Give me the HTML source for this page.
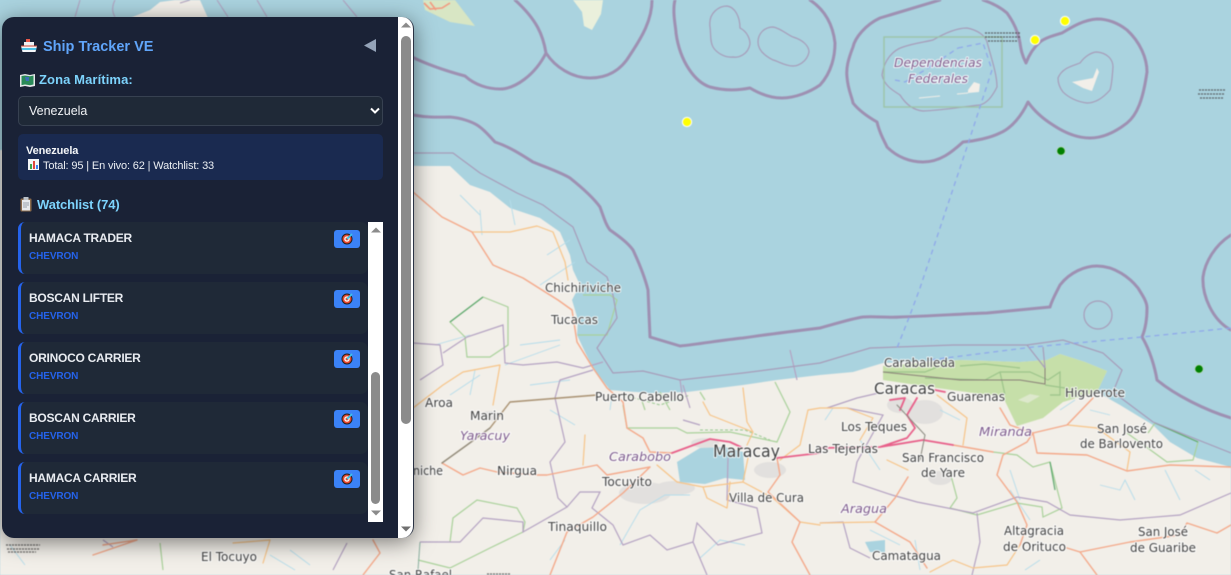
<!DOCTYPE html>
<html lang="es"><head><meta charset="utf-8"><title>Ship Tracker VE</title>
<style>
html,body{margin:0;padding:0;width:1231px;height:575px;overflow:hidden;background:#aad3df}
body{position:relative;font-family:"Liberation Sans",sans-serif}
#map{position:absolute;left:0;top:0;filter:blur(.5px)}
#map text{font-family:"DejaVu Sans",sans-serif;fill:#404040;font-size:12.5px;paint-order:stroke;stroke:rgba(255,255,255,.85);stroke-width:2px;stroke-linejoin:round}
#map text.r{fill:#7d5a8c;font-style:italic}
.p{position:absolute;left:2px;top:17px;width:411px;height:521px;border-radius:12px;background:#1a2236;box-shadow:0 4px 22px rgba(0,0,0,.5);overflow:hidden;border-right:1px solid #2a3244;box-sizing:content-box}
.a{position:absolute;white-space:nowrap}
.sb{position:absolute;background:#fff}
.th{position:absolute;background:#8b8b8b;border-radius:5px}
.card{position:absolute;left:16px;width:350px;height:52px;background:#1f2937;border-left:3px solid #2563eb;border-radius:7px;box-sizing:border-box}
.card b{position:absolute;left:8px;top:9px;font-size:12px;line-height:15px;color:#e8ebf0;letter-spacing:-.25px}
.card i{position:absolute;left:8px;top:28px;font-style:normal;font-weight:bold;font-size:10px;line-height:13px;color:#2563eb;letter-spacing:-.1px}
.card u{position:absolute;left:313px;top:8px;width:26px;height:18px;background:#3b82f6;border-radius:3px;text-decoration:none}
.card svg{position:absolute;left:7px;top:3px}
select{appearance:none;-webkit-appearance:none;position:absolute;left:16px;top:79px;width:365px;height:30px;background:#1f2937;border:1px solid #374151;border-radius:5px;color:#f0f2f5;font:12.5px "Liberation Sans",sans-serif;padding:0 0 0 10px;margin:0;box-sizing:border-box}
</style></head><body>
<svg id="map" width="1231" height="575" viewBox="0 0 1231 575" xmlns="http://www.w3.org/2000/svg">
<rect width="1231" height="575" fill="#aad3df"/>
<!-- land -->
<path fill="#f2efe9" d="M0 150 L420 166 L450 166 L470 185 L490 192 L510 208 L540 218 L560 232 L570 255 L573 270 L580 285 L572 300 L578 320 L577 335 L585 352 L593 368 L610 390 L650 393 L687 392 L743 385 L777 380 L820 375 L853 372 L883 363 L960 360 L1020 362 L1047 360 L1060 354 L1085 362 L1107 371 L1097 392 L1120 405 L1153 425 L1170 442 L1197 458 L1231 467 L1231 575 L0 575Z"/>
<!-- islands -->
<path fill="#f2efe9" d="M130 18 L150 10 L160 2 L175 0 L200 0 L208 18Z"/>
<path fill="#d8e6c4" d="M423 0 L455 0 L475 26 L450 22 L425 10Z"/>
<path fill="none" stroke="#f29a80" stroke-width="1.6" d="M424 3 L430 9 L442 8 L450 3 M430 2 L436 10"/>
<path fill="#eaf0dc" d="M573 0 L603 0 L601 14 L592 30 L584 26 L582 12Z"/>
<path fill="#f2efe9" d="M1072 82 L1093 78 L1097 68 L1099 72 L1092 91 L1083 88Z"/>
<path fill="#f2efe9" d="M968 90 L974 82 L980 84 L979 92 L968 93Z"/>
<path fill="none" stroke="#f2efe9" d="M919 98 L940 96 M957 94 L968 93"/>
<!-- park -->
<path fill="#c6dfa9" d="M883 366 L960 360 L1020 362 L1047 360 L1060 354 L1085 362 L1107 371 L1097 392 L1063 402 L1043 418 L1017 426 L1003 397 L937 388 L883 380Z"/>
<path fill="#dde8cc" d="M1018 400 L1030 394 L1040 396 L1028 403Z"/>
<path fill="none" stroke="#9cc48a" stroke-width="1.2" d="M883 372 L925 372 L950 362 M925 378 L985 380 L1000 372 L1030 372 L1048 380 L1060 372 L1060 395 L1050 395 M1000 372 L1005 395 M960 366 L985 364 L1020 368 M1045 385 L1065 388"/>
<path fill="none" stroke="#8a7f78" stroke-width="1" d="M883 372 L960 380 L1020 380 L1045 384 L1045 368"/>
<!-- urban -->
<g fill="#e2e0de"><ellipse cx="925" cy="412" rx="18" ry="12"/><ellipse cx="900" cy="405" rx="13" ry="8"/><ellipse cx="645" cy="493" rx="26" ry="11"/><ellipse cx="675" cy="488" rx="20" ry="7"/><ellipse cx="770" cy="470" rx="16" ry="8"/><ellipse cx="490" cy="416" rx="10" ry="5"/><ellipse cx="940" cy="478" rx="12" ry="7"/><ellipse cx="705" cy="443" rx="14" ry="5"/></g>
<!-- lakes -->
<path fill="#aad3df" d="M677 462 L700 448 L725 447 L743 452 L745 480 L725 478 L705 484 L680 482Z"/>
<path fill="#aad3df" d="M865 542 L885 540 L885 552 L870 552Z"/>
<path fill="#aad3df" d="M582 302 L600 295 L607 315 L597 335 L578 335Z"/>
<!-- rivers -->
<path fill="none" stroke="#b4dcea" stroke-width=".9" d="M435 345 L470 335 M520 345 L560 340 M505 365 L560 345 M450 395 L480 375 M470 395 L475 370 M530 385 L570 380 M550 410 L575 425 M610 410 L612 395 M620 545 L640 510 L665 495 L690 495 M550 560 L565 540 M700 558 L720 540 L745 545 M460 195 L480 215 M480 210 L482 235 M510 200 L515 225 M547 255 L570 240 M540 285 L575 262 M833 408 L825 420 M860 440 L880 470 M1010 470 L1020 500 M1100 485 L1120 490 L1125 480 L1135 500 M1165 470 L1180 500 M1210 480 L1195 470 M960 420 L940 410 M1060 410 L1075 400 M1090 410 L1110 415 M10 545 L25 565 M290 550 L310 565 M270 555 L295 570 M1030 520 L1010 490 M1040 560 L1025 570 M870 530 L900 545 M915 540 L920 570"/>
<!-- green admin -->
<path fill="none" stroke="#a9d19a" stroke-width="1.2" d="M450 322 L483 297 L508 307 L508 345 L490 357 L467 357 L465 337Z M623 405 L627 428 L677 428 L687 433 L730 432 L777 442 L790 412 L775 382 M640 395 L645 410 M660 392 L670 410 M700 392 L705 400 M950 472 L957 498 L950 508 L977 515 L1017 503 L1042 507 L1043 517 L1062 508 L1050 462 L1033 467 L1017 455 L993 452 M1127 433 L1167 462 L1193 460 L1198 442 L1155 423 L1148 433 M450 542 L453 518 L477 500 L517 508 L525 522 L523 532 L490 548 L450 568 L418 560 M583 295 L610 295 L617 300 L607 335 L578 335 M160 543 L163 570"/>
<path fill="none" stroke="#5ea86e" stroke-width="1.2" d="M450 322 L483 297 M1155 423 L1198 442 M1050 462 L1055 490"/>
<path fill="none" stroke="#98c890" stroke-width="1" stroke-dasharray="3 2" d="M623 395 L660 405 L690 395 M700 430 L745 430 L770 440"/>
<path fill="none" stroke="#8ab0a0" stroke-width="1" d="M420 542 L418 570"/>
<!-- purple admin -->
<path fill="none" stroke="#b4a2c2" stroke-width="1.2" d="M413 343 L440 345 L443 365 L420 380 M443 353 L467 337 L503 325 L505 363 L523 365 L557 362 L583 368 L603 362 M593 370 L560 380 L555 398 L565 442 L550 462 L558 498 L567 507 L523 532 L523 522 L483 518 L460 542 L420 542 M567 507 L580 492 L600 492 L592 508 L613 525 L623 545 L650 535 L667 550 L693 542 L697 523 L718 545 L762 533 L757 508 L727 500 L728 458 M693 542 L707 575 M827 408 L857 398 L883 392 M847 408 L883 415 L857 462 L853 482 L892 495 L917 502 L973 513 L1017 497 L1047 502 L1070 515 L1120 520 L1180 515 L1231 493 M977 513 L980 542 L972 575 M820 523 L843 522 L850 548 L870 558 M797 380 L790 350 M680 380 L683 400 M683 420 L700 425 M103 540 L113 547 M347 543 L333 570 M690 408 L683 385"/>
<!-- roads -->
<g fill="none" stroke-linejoin="round" stroke-linecap="round">
<path stroke="#f7c488" stroke-width="1.2" d="M413 408 L443 385 L463 372 L500 365 L493 405 M472 232 L510 232 L537 226 L553 232 L565 262 L568 280 M585 435 L583 465 M657 465 L677 482 L703 487 L743 482 L748 458 M703 487 L707 498 L727 508 L730 482 M743 482 L773 498 L800 522 L820 525 M703 402 L710 415 L753 432 L747 445 M743 388 L747 422 L753 432 M780 460 L800 445 L808 410 L820 408 M820 523 L875 522 M1068 425 L1097 428 L1130 452 L1127 470 M908 470 L887 460 M937 395 L967 418 L963 445 M1020 545 L1007 565 L973 568 L953 560 L930 572 M820 408 L847 408 L873 418 L860 440 M233 543 L270 540 L263 563"/>
<path stroke="#f4a98a" stroke-width="1.4" d="M413 192 L442 217 L472 232 L493 265 L523 278 L542 290 L558 300 L572 310 L577 342 L593 368 L607 388 L623 402 L627 428 L643 438 L650 452 L672 453 M442 463 L463 475 L480 468 L497 472 L537 475 L547 475 L597 465 L607 475 L650 467 M650 467 L623 493 L593 517 L567 532 L550 575 M777 458 L780 475 L768 492 L800 522 L792 542 L810 575 M1033 433 L1067 425 L1093 398 M1033 433 L1037 453 L1087 455 L1127 471 L1170 465 L1231 467 M1033 433 L1027 442 L1003 455 L997 475 L1017 502 L1027 525 L1020 545 M1000 408 L1010 425 L1033 433 M908 477 L895 498 L875 522 L910 542 L927 568 M1067 548 L1080 552 L1130 542 L1180 535 L1187 523 L1217 533 L1231 525 M1080 552 L1097 575 M953 445 L993 452 M103 545 L137 540 L93 555 M373 540 L380 553 L363 575"/>
<path stroke="#e8608a" stroke-width="1.8" d="M672 453 L710 439 L730 442 L743 448 M777 458 L820 453 M820 448 L880 447 L907 438 L915 428 L907 415 L917 398 M923 440 L953 445 M880 447 L923 440 M935 390 L945 392 M890 400 L905 398 M905 398 L900 410"/>
<path stroke="#a89070" stroke-width="1.4" d="M442 463 L467 445 L490 428 L510 402 L597 395"/>
<path stroke="#8a8a80" stroke-width="1" d="M442 463 L467 445 L490 428 M897 405 L925 435 L920 460"/>
</g>
<!-- inner maritime -->
<path fill="none" stroke="#a79cb9" stroke-width="1.2" d="M413 153 L453 153 L480 173 L517 193 L543 205 L573 227 L587 262 L607 277 L613 295 L617 318 L597 348 L613 373 L643 371 L680 380 L743 373 L820 363 L870 348 L953 345 L1027 345 L1063 340 L1103 353 L1122 370 L1113 392 L1153 422 L1231 453"/>
<path fill="none" stroke="#a79cb9" stroke-width="1.2" d="M1043 347 L1045 368 M1027 345 L1045 368 M710 27 C708 12 720 6 727 6 C735 7 740 17 740 28 C748 32 750 40 750 44 C748 55 738 58 733 57 C724 58 716 52 713 47 C710 42 711 34 710 27Z M758 42 C758 33 765 27 773 27 C780 28 788 35 793 37 C803 40 809 46 809 52 C807 62 798 66 793 66 C785 66 778 61 773 60 C765 56 758 50 758 42Z M1058 78 C1062 68 1072 66 1080 63 C1085 56 1092 52 1097 52 C1108 53 1113 60 1113 67 C1112 78 1112 84 1110 90 C1103 98 1095 103 1087 103 C1077 102 1068 97 1063 92 C1059 87 1058 83 1058 78Z M882 75 C884 60 893 50 903 47 C915 43 925 42 933 40 C945 33 957 28 967 28 C977 30 985 35 987 42 C992 60 997 75 997 87 C992 97 987 103 980 105 C960 107 945 110 923 111 C912 110 905 103 900 95 C892 90 884 85 882 75Z"/>
<circle cx="1098" cy="315" r="14" fill="none" stroke="#a79cb9" stroke-width="1.2"/>
<path fill="none" stroke="#b0a2c0" stroke-width="1.1" d="M115 0 C112 6 112 12 115 17 M75 17 L80 0 M217 0 L228 17 M257 0 L267 17 M343 0 L357 17 M180 3 L190 0"/>
<!-- main maritime -->
<path fill="none" stroke="#9e90b2" stroke-width="3" stroke-linejoin="round" stroke-linecap="round" d="M410 56 C430 66 450 72 465 76 C475 85 488 89 500 89 C515 89 535 75 546 53 C543 35 537 20 515 0 M546 53 C555 67 572 78 590 78 C605 78 620 72 630 55 C642 37 652 20 652 0 M675 0 C672 12 676 28 676 33 C680 62 695 82 710 87 C725 91 740 90 750 88 C760 94 770 98 782 98 C795 98 810 92 820 85 C832 72 835 55 835 43 C833 25 825 10 810 0 M940 0 C920 6 900 12 880 18 C865 25 855 38 853 47 C848 60 846 68 847 77 C848 90 852 97 853 103 C860 112 870 118 877 122 C880 135 885 142 887 147 C897 157 910 162 923 162 C940 162 952 152 963 142 C975 141 990 138 1000 133 C1012 128 1022 115 1028 102 C1035 112 1045 120 1053 125 C1065 133 1078 138 1090 138 C1105 138 1118 130 1127 123 C1137 115 1143 100 1147 72 C1147 58 1140 42 1127 30 C1118 23 1108 19 1097 19 C1083 20 1072 27 1062 33 C1052 36 1045 38 1040 42 C1033 48 1029 55 1026 63 C1022 55 1021 50 1020 43 C1018 30 1012 20 1007 13 C1000 7 992 3 983 0 M1231 235 C1215 245 1205 262 1203 277 C1202 295 1212 320 1231 330 M1050 307 C1052 300 1055 295 1060 285 C1070 272 1085 266 1097 266 C1115 266 1130 278 1138 288 C1143 296 1147 302 1147 308 C1147 320 1145 330 1142 337 C1150 350 1155 368 1157 380 C1175 395 1205 410 1231 418 M413 115 C430 118 440 117 450 117 C462 118 472 122 477 125 C485 130 490 137 495 142 C510 147 522 155 533 162 C545 167 560 172 570 178 C585 190 595 200 600 207 C604 218 606 225 610 230 C620 237 628 243 633 250 C640 265 645 278 648 290 L650 337 C660 340 670 343 680 346 C700 344 722 340 743 338 C770 334 795 331 820 328 C835 324 850 319 863 317 C875 316 888 318 900 317 C930 316 960 314 987 313 C1010 311 1030 309 1050 307"/>
<!-- fed rect -->
<rect x="884" y="37" width="118" height="70" fill="none" stroke="#9cc4a8" stroke-width="1.4"/>
<!-- maritime dashed -->
<path fill="none" stroke="#8fa8ea" stroke-width="1.3" stroke-dasharray="5 4" d="M958 48 L983 43 L992 70 L967 147 L920 288 L910 315 L897 348 M1231 328 L1142 337 L1033 347 L930 360 M895 80 L905 82 L925 70 L958 48"/>
<!-- garbled labels -->
<g fill="none" stroke="#444" stroke-width="1.2" opacity=".8" stroke-dasharray="2 1"><path d="M985 33 H1020 M985 37 H1020 M988 41 H1018"/><path d="M1199 90 H1225 M1198 94 H1225 M1200 98 H1224"/><path d="M6 545 H40 M7 549 H39 M8 552 H36"/><path d="M487 574 H510"/></g>
<!-- labels -->
<text x="545" y="292" textLength="76" lengthAdjust="spacingAndGlyphs">Chichiriviche</text>
<text x="551" y="324" textLength="47" lengthAdjust="spacingAndGlyphs">Tucacas</text>
<text x="425" y="407" textLength="28" lengthAdjust="spacingAndGlyphs">Aroa</text>
<text x="470" y="420" textLength="34" lengthAdjust="spacingAndGlyphs">Marin</text>
<text class="r" x="460" y="440" textLength="50" lengthAdjust="spacingAndGlyphs">Yaracuy</text>
<text x="413" y="475" textLength="30" lengthAdjust="spacingAndGlyphs">niche</text>
<text x="497" y="475" textLength="40" lengthAdjust="spacingAndGlyphs">Nirgua</text>
<text x="595" y="401" textLength="89" lengthAdjust="spacingAndGlyphs">Puerto Cabello</text>
<text class="r" x="609" y="461" textLength="62" lengthAdjust="spacingAndGlyphs">Carabobo</text>
<text x="713" y="457" textLength="67" lengthAdjust="spacingAndGlyphs" style="font-size:17px">Maracay</text>
<text x="602" y="486" textLength="50" lengthAdjust="spacingAndGlyphs">Tocuyito</text>
<text x="729" y="502" textLength="75" lengthAdjust="spacingAndGlyphs">Villa de Cura</text>
<text x="548" y="531" textLength="59" lengthAdjust="spacingAndGlyphs">Tinaquillo</text>
<text x="201" y="561" textLength="56" lengthAdjust="spacingAndGlyphs">El Tocuyo</text>
<text x="389" y="579" textLength="63" lengthAdjust="spacingAndGlyphs">San Rafael</text>
<text class="r" x="841" y="513" textLength="46" lengthAdjust="spacingAndGlyphs">Aragua</text>
<text x="872" y="560" textLength="69" lengthAdjust="spacingAndGlyphs">Camatagua</text>
<text x="1004" y="535" textLength="60" lengthAdjust="spacingAndGlyphs">Altagracia</text>
<text x="1003" y="551" textLength="63" lengthAdjust="spacingAndGlyphs">de Orituco</text>
<text x="1138" y="536" textLength="50" lengthAdjust="spacingAndGlyphs">San José</text>
<text x="1130" y="552" textLength="66" lengthAdjust="spacingAndGlyphs">de Guaribe</text>
<text x="884" y="367" textLength="71" lengthAdjust="spacingAndGlyphs">Caraballeda</text>
<text x="874" y="394" textLength="61" lengthAdjust="spacingAndGlyphs" style="font-size:16px">Caracas</text>
<text x="947" y="401" textLength="58" lengthAdjust="spacingAndGlyphs">Guarenas</text>
<text x="1065" y="397" textLength="60" lengthAdjust="spacingAndGlyphs">Higuerote</text>
<text x="841" y="431" textLength="66" lengthAdjust="spacingAndGlyphs">Los Teques</text>
<text x="808" y="453" textLength="70" lengthAdjust="spacingAndGlyphs">Las Tejerías</text>
<text x="902" y="462" textLength="82" lengthAdjust="spacingAndGlyphs">San Francisco</text>
<text x="921" y="477" textLength="44" lengthAdjust="spacingAndGlyphs">de Yare</text>
<text class="r" x="979" y="436" textLength="53" lengthAdjust="spacingAndGlyphs">Miranda</text>
<text x="1097" y="433" textLength="50" lengthAdjust="spacingAndGlyphs">San José</text>
<text x="1080" y="448" textLength="83" lengthAdjust="spacingAndGlyphs">de Barlovento</text>
<text class="r" x="894" y="67" textLength="88" lengthAdjust="spacingAndGlyphs">Dependencias</text>
<text class="r" x="908" y="83" textLength="60" lengthAdjust="spacingAndGlyphs">Federales</text>
<!-- markers -->
<g stroke="#fff" stroke-width="1"><circle cx="687" cy="122" r="4.6" fill="#ff0"/><circle cx="1065" cy="21" r="4.6" fill="#ff0"/><circle cx="1035" cy="40" r="4.6" fill="#ff0"/></g>
<g stroke="#b8d8c0" stroke-width=".8"><circle cx="1061" cy="151" r="4.2" fill="#008000"/><circle cx="1199" cy="369" r="4.2" fill="#008000"/></g>
</svg>

<div class="p">
  <svg class="a" style="left:18px;top:21px" width="18" height="16" viewBox="0 0 18 16"><path d="M6 1h4v4H6z" fill="#e8584a"/><path d="M4 4h10v4H4z" fill="#eef2f5"/><path d="M1 8h16l-1.500 6H2.500z" fill="#f4f7fa"/><path d="M1.500 10h15l-.5 2H2z" fill="#4cc2e8"/><path d="M1 8h16" stroke="#d04a3a"/></svg>
  <span class="a" style="left:41px;top:21px;font-size:14.5px;line-height:18px;font-weight:bold;color:#60a5fa">Ship Tracker VE</span>
  <svg class="a" style="left:362px;top:22px" width="12" height="13"><path d="M0 6.500L12 0V13Z" fill="#94a3b8"/></svg>
  <svg class="a" style="left:18px;top:57px" width="15" height="13" viewBox="0 0 15 13"><path d="M0 1l5-1 5 1 5-1v12l-5 1-5-1-5 1z" fill="#e6e8ea"/><path d="M1.500 2l3.500-.5 5 .8 3.500-.8v9l-3.500.8-5-.8-3.500.6z" fill="#2a8a58"/><path d="M5 3h4v4H6z" fill="#3a6fb8"/></svg>
  <span class="a" style="left:37px;top:55px;font-size:13px;line-height:16px;font-weight:bold;color:#7dd3fc;letter-spacing:.1px">Zona Marítima:</span>
  <select><option>Venezuela</option></select>
  <svg class="a" style="left:368px;top:90px" width="10" height="8"><path d="M1 1.500L5 5.500L9 1.500" fill="none" stroke="#fff" stroke-width="2"/></svg>
  <div class="a" style="left:16px;top:117px;width:365px;height:46px;background:#1a2a50;border-radius:5px"></div>
  <span class="a" style="left:24px;top:127px;font-size:11px;line-height:14px;font-weight:bold;color:#f4f6f8;letter-spacing:-.1px">Venezuela</span>
  <svg class="a" style="left:26px;top:142px" width="11" height="11" viewBox="0 0 11 11"><rect width="11" height="11" fill="#f4f6f8"/><path d="M2 5h2v5H2z" fill="#3fa34d"/><path d="M5 2h2v8H5z" fill="#e0483e"/><path d="M8 6h2v4H8z" fill="#3b82f6"/></svg>
  <span class="a" style="left:41px;top:142px;font-size:11px;line-height:14px;color:#eceff3;letter-spacing:-.14px">Total: 95 | En vivo: 62 | Watchlist: 33</span>
  <svg class="a" style="left:18px;top:180px" width="12" height="15" viewBox="0 0 12 15"><rect x=".5" y="1.500" width="11" height="13" rx="1" fill="#8a6a4a"/><rect x="2" y="3" width="8" height="10.500" fill="#e8eaec"/><rect x="3.500" y="0" width="5" height="3" fill="#bcc2c8"/><path d="M3 6h6M3 8h6M3 10h4" stroke="#9aa3ad"/></svg>
  <span class="a" style="left:35px;top:180px;font-size:13px;line-height:16px;font-weight:bold;color:#7dd3fc;letter-spacing:-.1px">Watchlist (74)</span>

  <div class="card" style="top:205px"><b>HAMACA TRADER</b><i>CHEVRON</i><u><svg width="12" height="12" viewBox="0 0 12 12"><circle cx="6" cy="6" r="5.500" fill="#1f1f1f"/><circle cx="6" cy="6" r="4.500" fill="#e8452c"/><circle cx="6" cy="6" r="2.800" fill="#f6f2ee"/><circle cx="6" cy="6" r="1.400" fill="#e8452c"/><path d="M6 6L11 1" stroke="#3cc4e8" stroke-width="1.600"/></svg></u></div>
  <div class="card" style="top:265px"><b>BOSCAN LIFTER</b><i>CHEVRON</i><u><svg width="12" height="12" viewBox="0 0 12 12"><circle cx="6" cy="6" r="5.500" fill="#1f1f1f"/><circle cx="6" cy="6" r="4.500" fill="#e8452c"/><circle cx="6" cy="6" r="2.800" fill="#f6f2ee"/><circle cx="6" cy="6" r="1.400" fill="#e8452c"/><path d="M6 6L11 1" stroke="#3cc4e8" stroke-width="1.600"/></svg></u></div>
  <div class="card" style="top:325px"><b>ORINOCO CARRIER</b><i>CHEVRON</i><u><svg width="12" height="12" viewBox="0 0 12 12"><circle cx="6" cy="6" r="5.500" fill="#1f1f1f"/><circle cx="6" cy="6" r="4.500" fill="#e8452c"/><circle cx="6" cy="6" r="2.800" fill="#f6f2ee"/><circle cx="6" cy="6" r="1.400" fill="#e8452c"/><path d="M6 6L11 1" stroke="#3cc4e8" stroke-width="1.600"/></svg></u></div>
  <div class="card" style="top:385px"><b>BOSCAN CARRIER</b><i>CHEVRON</i><u><svg width="12" height="12" viewBox="0 0 12 12"><circle cx="6" cy="6" r="5.500" fill="#1f1f1f"/><circle cx="6" cy="6" r="4.500" fill="#e8452c"/><circle cx="6" cy="6" r="2.800" fill="#f6f2ee"/><circle cx="6" cy="6" r="1.400" fill="#e8452c"/><path d="M6 6L11 1" stroke="#3cc4e8" stroke-width="1.600"/></svg></u></div>
  <div class="card" style="top:445px"><b>HAMACA CARRIER</b><i>CHEVRON</i><u><svg width="12" height="12" viewBox="0 0 12 12"><circle cx="6" cy="6" r="5.500" fill="#1f1f1f"/><circle cx="6" cy="6" r="4.500" fill="#e8452c"/><circle cx="6" cy="6" r="2.800" fill="#f6f2ee"/><circle cx="6" cy="6" r="1.400" fill="#e8452c"/><path d="M6 6L11 1" stroke="#3cc4e8" stroke-width="1.600"/></svg></u></div>

  <div class="sb" style="left:366px;top:205px;width:15px;height:300px"></div>
  <svg class="a" style="left:369px;top:210px" width="10" height="6"><path d="M0 5.500L5 .5L10 5.500Z" fill="#8b8b8b"/></svg>
  <div class="th" style="left:369px;top:355px;width:9px;height:132px"></div>
  <svg class="a" style="left:369px;top:493px" width="10" height="6"><path d="M0 .5L5 5.500L10 .5Z" fill="#8b8b8b"/></svg>

  <div class="sb" style="left:396px;top:0;width:15px;height:521px"></div>
  <svg class="a" style="left:399px;top:5px" width="10" height="6"><path d="M0 5.500L5 .5L10 5.500Z" fill="#8b8b8b"/></svg>
  <div class="th" style="left:399px;top:19px;width:10px;height:388px"></div>
  <svg class="a" style="left:399px;top:509px" width="10" height="6"><path d="M0 .5L5 5.500L10 .5Z" fill="#707070"/></svg>
</div>
</body></html>
